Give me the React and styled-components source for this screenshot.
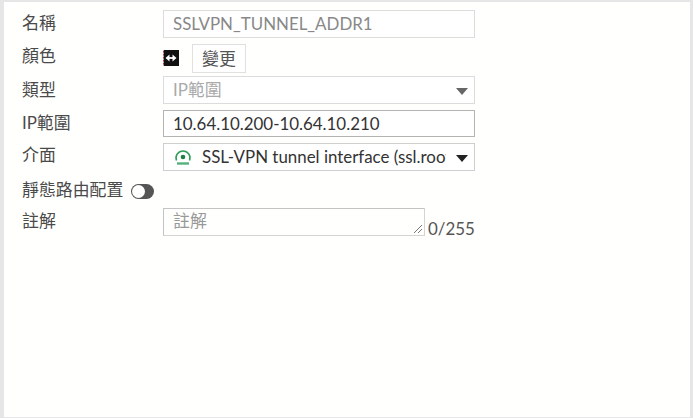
import React from 'react';
import styled, { createGlobalStyle } from 'styled-components';

const Global = createGlobalStyle`
  html, body { margin: 0; padding: 0; background: #e6e6e6; }
  body { font-family: Lato, "Noto Sans CJK TC", sans-serif; font-size: 16.9px; color: #444; }
`;
const Frame = styled.div`
  width: 693px; height: 418px; box-sizing: border-box;
  padding: 2px 3px 1px 4px; background: #e6e6e6; overflow: hidden;
`;
const Panel = styled.form`
  height: 100%; box-sizing: border-box; background: #fffffe;
  padding: 8px 0 0 18px; display: flex; flex-direction: column;
`;
const Row = styled.div`
  display: flex; align-items: ${p => p.$align || 'center'};
  height: ${p => p.$h}px; margin-top: ${p => p.$mt || 0}px;
`;
const Label = styled.label`
  width: 141px; flex: none; line-height: 24px; color: #4a4a4a;
  transform: translateY(${p => p.$dy || 0}px);
`;
const Field = styled.div`
  width: 312px; height: ${p => p.$h || 28}px; box-sizing: border-box; flex: none;
  display: flex; align-items: center; padding: 0 9px; background: #fff;
  border: 1px solid ${p => p.$border || '#dcdcdc'};
  color: ${p => p.$color || '#888'};
  white-space: nowrap; overflow: hidden; line-height: 24px;
`;
const SelectField = styled(Field)`
  position: relative;
  padding-right: 28px;
`;
const Caret = styled.span`
  position: absolute; right: 6px; top: 11px; width: 0; height: 0;
  border-left: 6px solid transparent; border-right: 6px solid transparent;
  border-top: 7px solid ${p => p.$color};
`;
const ColorTag = styled.svg`
  width: 16px; height: 16px; flex: none; display: block; margin-top: -1px;
`;
const ChangeButton = styled.button`
  width: 54px; height: 29px; margin-left: 13px; padding: 0; box-sizing: border-box;
  background: #fff; border: 1px solid #e0e0e0; color: #555;
  font: inherit; line-height: 24px;
`;
const IfaceIcon = styled.svg`
  width: 18px; height: 18px; flex: none; margin: 1px 10px 0 1px; display: block;
`;
const ClippedText = styled.span`
  overflow: hidden; white-space: nowrap; flex: 1; min-width: 0;
`;
const Toggle = styled.span`
  display: block; width: 23px; height: 15px; border-radius: 8px; flex: none;
  background: #555; position: relative; margin: 0 0 0 8px;
`;
const Knob = styled.span`
  position: absolute; left: 1px; top: 1px; width: 13px; height: 13px;
  border-radius: 50%; background: #fff;
`;
const LabelWide = styled(Label)`
  width: auto;
`;
const Comment = styled.div`
  width: 262px; height: 28px; box-sizing: border-box; flex: none; position: relative;
  border: 1px solid #c4c4c4; border-bottom-color: #d4d4d4; border-right-color: #d4d4d4;
  padding: 0 9px; color: #999; line-height: 24px;
`;
const Grip = styled.svg`
  position: absolute; right: 1px; bottom: 1px; width: 11px; height: 11px;
`;
const Counter = styled.span`
  margin: 9px 0 0 3px; line-height: 24px; color: #555;
`;

export default function App() {
  return (
    <Frame>
      <Global />
      <Panel>
        <Row $h={28}>
          <Label $dy={-1}>名稱</Label>
          <Field>SSLVPN_TUNNEL_ADDR1</Field>
        </Row>
        <Row $h={29} $mt={6}>
          <Label $dy={-3}>顏色</Label>
          <ColorTag viewBox="0 0 16 16">
            <rect x="0.7" y="0" width="15.3" height="16" fill="#111" />
            <path d="M0.5 1v14" stroke="#c0392b" strokeDasharray="1.5 1.5" fill="none" />
            <path d="M4 8h8" stroke="#fff" strokeWidth="1.8" />
            <path d="M6.5 4.5v7L2.5 8zM9.5 4.5v7l4-3.5z" fill="#fff" />
          </ColorTag>
          <ChangeButton type="button">變更</ChangeButton>
        </Row>
        <Row $h={28} $mt={3}>
          <Label $dy={0}>類型</Label>
          <SelectField $color="#aaa">IP範圍<Caret $color="#666" /></SelectField>
        </Row>
        <Row $h={27} $mt={6}>
          <Label $dy={-1}>IP範圍</Label>
          <Field $h={27} $border="#b4b4b4" $color="#333">10.64.10.200-10.64.10.210</Field>
        </Row>
        <Row $h={28} $mt={6}>
          <Label $dy={-2}>介面</Label>
          <SelectField $border="#cfcfcf" $color="#333">
            <IfaceIcon viewBox="0 0 18 18">
              <path d="M2.5 11.5a7 7 0 1 1 13 0" fill="none" stroke="#2e9e5b" strokeWidth="1.5" />
              <circle cx="9" cy="8" r="2.3" fill="#1d7f45" />
              <path d="M3 14.5h12" stroke="#55b07c" strokeWidth="2.4" />
            </IfaceIcon>
            <ClippedText>SSL-VPN tunnel interface (ssl.root)</ClippedText>
            <Caret $color="#222" />
          </SelectField>
        </Row>
        <Row $h={24} $mt={8}>
          <LabelWide $dy={-1}>靜態路由配置</LabelWide>
          <Toggle><Knob /></Toggle>
        </Row>
        <Row $h={37} $mt={5} $align="flex-start">
          <Label $dy={1}>註解</Label>
          <Comment>
            註解
            <Grip viewBox="0 0 11 11">
              <path d="M2 10 10 2M6 10l4-4" stroke="#777" strokeWidth="1" fill="none" />
            </Grip>
          </Comment>
          <Counter>0/255</Counter>
        </Row>
      </Panel>
    </Frame>
  );
}
